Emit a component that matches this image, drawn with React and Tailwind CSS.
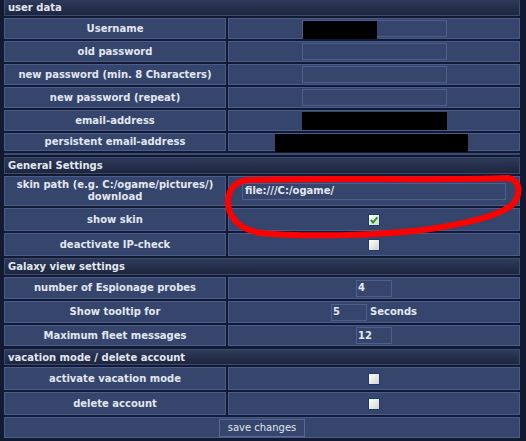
import React from 'react';

const font = { fontFamily: '"DejaVu Sans", Verdana, sans-serif' };

const Header = ({ title, className = '' }) => (
    <div className={`flex items-center border border-[#3c4a70] bg-linear-to-b from-[#2e3a5a] to-[#1e263e] pl-[3px] text-[10px] font-bold text-[#e2e7f2] ${className}`}>
        {title}
    </div>
);

const Cell = ({ children, className = '' }) => (
    <div className={`relative flex items-center justify-center border border-[#4a5c8c] bg-[#35456b] text-center ${className}`}>
        {children}
    </div>
);

const Row = ({ label, h, children }) => (
    <div className={`grid grid-cols-[222px_292px] gap-x-[2px] ${h}`}>
        <Cell className="px-1 text-[10px] font-bold leading-[12px] text-[#e2e7f2]">{label}</Cell>
        <Cell>{children}</Cell>
    </div>
);

const TextBox = ({ value = '', className = '' }) => (
    <div className={`flex h-[17px] items-center border border-[#4d5f8c] bg-[#35456b] pl-[1px] text-left text-[10px] font-bold leading-[12px] text-[#e2e7f2] ${className}`}>
        {value}
    </div>
);

const CheckBox = ({ checked }) => (
    <div className="flex h-[12px] w-[12px] items-center justify-center border border-[#1b3e72] bg-linear-to-br from-white to-[#d4d4ca]">
        {checked && (
            <svg width="10" height="10" viewBox="0 0 10 10">
                <path d="M1.8 5 L4 7.4 L8.4 2.4" fill="none" stroke="#249a24" strokeWidth="2" />
            </svg>
        )}
    </div>
);

export default function App() {
    return (
        <div className="relative h-[441px] w-[526px] overflow-hidden bg-[#121a32]" style={font}>
            <div className="flex w-[520px] flex-col gap-y-[2px] pl-[4px]">
                {/* user data */}
                <Header title="user data" className="-mt-px h-[17px]" />
                <Row label="Username" h="h-[21px]">
                    <TextBox className="w-[145px]" />
                    <div className="absolute left-[74px] top-[2px] h-[18px] w-[74px] bg-black"></div>
                </Row>
                <Row label="old password" h="h-[21px]">
                    <TextBox className="w-[145px]" />
                </Row>
                <Row label="new password (min. 8 Characters)" h="h-[21px]">
                    <TextBox className="w-[145px]" />
                </Row>
                <Row label="new password (repeat)" h="h-[21px]">
                    <TextBox className="w-[145px]" />
                </Row>
                <Row label="email-address" h="h-[21px]">
                    <div className="h-[18px] w-[145px] bg-black"></div>
                </Row>
                <Row label="persistent email-address" h="h-[18px]">
                    <div className="absolute left-[46px] top-[0px] h-[18px] w-[193px] bg-black"></div>
                </Row>
                <div className="h-[2px] border-y border-[#3c4a70]"></div>

                {/* General Settings */}
                <Header title="General Settings" className="h-[17px]" />
                <Row label={<span>skin path (e.g. C:/ogame/pictures/)<br />download</span>} h="h-[30px]">
                    <TextBox value="file:///C:/ogame/" className="w-[264px] pl-[2px]" />
                </Row>
                <Row label="show skin" h="h-[23px]">
                    <CheckBox checked />
                </Row>
                <Row label="deactivate IP-check" h="h-[23px]">
                    <CheckBox />
                </Row>

                {/* Galaxy view settings */}
                <Header title="Galaxy view settings" className="h-[17px]" />
                <Row label="number of Espionage probes" h="h-[22px]">
                    <TextBox value="4" className="w-[36px]" />
                </Row>
                <Row label="Show tooltip for" h="h-[22px]">
                    <div className="flex items-center gap-[3px]">
                        <TextBox value="5" className="w-[36px]" />
                        <span className="text-[10px] font-bold leading-[12px] text-[#e2e7f2]">Seconds</span>
                    </div>
                </Row>
                <Row label="Maximum fleet messages" h="h-[21px]">
                    <TextBox value="12" className="w-[36px]" />
                </Row>

                {/* vacation mode / delete account */}
                <Header title="vacation mode / delete account" className="mt-px h-[16px]" />
                <Row label="activate vacation mode" h="h-[23px]">
                    <CheckBox />
                </Row>
                <Row label="delete account" h="h-[23px]">
                    <CheckBox />
                </Row>
                <Cell className="h-[21px]">
                    <div className="flex h-[18px] w-[86px] items-center justify-center border border-[#55689a] text-[10px] text-[#e2e7f2]">
                        save changes
                    </div>
                </Cell>
            </div>

            {/* red hand-drawn marker */}
            <svg className="pointer-events-none absolute left-0 top-0" width="526" height="441">
                <path
                    d="M248 180 C320 177 430 181 508 178 C522 180 521 197 511 206 C494 217 468 223 430 229 C380 236 300 237 260 233 C238 229 228 216 228 202 C228 189 236 181 248 180 Z"
                    fill="none"
                    stroke="#ff0000"
                    strokeWidth="6"
                    strokeLinecap="round"
                    strokeLinejoin="round"
                />
            </svg>
        </div>
    );
}
